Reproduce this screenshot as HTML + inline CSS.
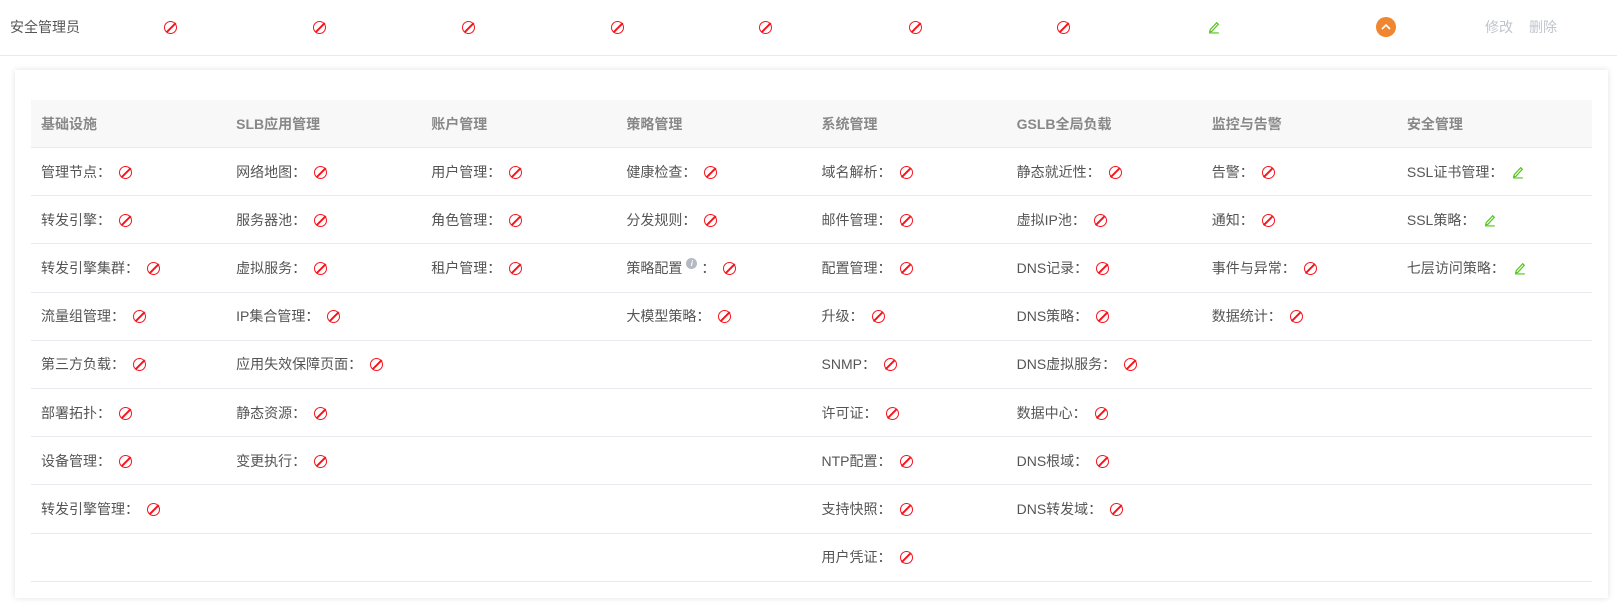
<!DOCTYPE html>
<html><head><meta charset="utf-8"><style>
body{margin:0;background:#fff;font-family:"Liberation Sans","Noto Sans CJK SC",sans-serif;font-size:14px;color:#555;width:1617px;height:606px;overflow:hidden;position:relative}
.top{position:absolute;left:0;top:0;width:1617px;height:55px;border-bottom:1px solid #e8e8ee}
.ab{position:absolute;top:19px;line-height:16px}
.no{display:inline-block;width:11px;height:11px;border:1.5px solid #f5141e;border-radius:50%;position:relative;vertical-align:-2px}
.no:after{content:"";position:absolute;left:50%;top:-1px;width:1.5px;height:13px;background:#f5141e;transform:translateX(-50%) rotate(45deg)}
.card{position:absolute;left:15px;top:70px;width:1593px;height:528px;background:#fff;box-shadow:0 0 6px rgba(0,0,0,.12)}
table{position:absolute;left:16px;top:30px;width:1561px;border-collapse:collapse;table-layout:fixed}
th{background:#f8f8f8;height:47px;text-align:left;padding:0 10px;color:#888;font-weight:bold;border-bottom:1px solid #e8e8ee}
td{height:47.2px;padding:0 10px;border-bottom:1px solid #e8e8ee;white-space:nowrap}
td .no{margin-left:8px}
.pen{display:inline-block;margin-left:8px;vertical-align:-2px}
.info{display:inline-block;width:11px;height:11px;border-radius:50%;background:#b5b9c2;color:#fff;font-size:8px;line-height:11px;text-align:center;font-style:italic;font-weight:bold;vertical-align:7px;margin:0 4px}
</style></head><body>
<div class="top">
<div class="ab" style="left:10px">安全管理员</div>
<span class="ab" style="left:164px"><span class="no"></span></span>
<span class="ab" style="left:313px"><span class="no"></span></span>
<span class="ab" style="left:462px"><span class="no"></span></span>
<span class="ab" style="left:611px"><span class="no"></span></span>
<span class="ab" style="left:759px"><span class="no"></span></span>
<span class="ab" style="left:909px"><span class="no"></span></span>
<span class="ab" style="left:1057px"><span class="no"></span></span>
<svg class="ab" style="left:1207px;top:20px" width="14" height="14" viewBox="0 0 13 13"><path d="M3 9 L9 2.5 L10.5 4 L4.5 10.5 L2.5 11 Z M2 12 H11" fill="none" stroke="#52c41a" stroke-width="1.1"/></svg>
<div style="position:absolute;left:1376px;top:17px;width:20px;height:20px;border-radius:50%;background:#f0862f"><svg width="20" height="20"><path d="M6 12 L10 8 L14 12" fill="none" stroke="#fff" stroke-width="1.6"/></svg></div>
<div class="ab" style="left:1485px;color:#c0c4cc">修改</div>
<div class="ab" style="left:1529px;color:#c0c4cc">删除</div>
</div>
<div class="card"><table>
<tr><th>基础设施</th><th>SLB应用管理</th><th>账户管理</th><th>策略管理</th><th>系统管理</th><th>GSLB全局负载</th><th>监控与告警</th><th>安全管理</th></tr>
<tr><td>管理节点：<span class="no"></span></td><td>网络地图：<span class="no"></span></td><td>用户管理：<span class="no"></span></td><td>健康检查：<span class="no"></span></td><td>域名解析：<span class="no"></span></td><td>静态就近性：<span class="no"></span></td><td>告警：<span class="no"></span></td><td>SSL证书管理：<svg class="pen" width="14" height="14" viewBox="0 0 13 13"><path d="M3 9 L9 2.5 L10.5 4 L4.5 10.5 L2.5 11 Z M2 12 H11" fill="none" stroke="#52c41a" stroke-width="1.1"/></svg></td></tr>
<tr><td>转发引擎：<span class="no"></span></td><td>服务器池：<span class="no"></span></td><td>角色管理：<span class="no"></span></td><td>分发规则：<span class="no"></span></td><td>邮件管理：<span class="no"></span></td><td>虚拟IP池：<span class="no"></span></td><td>通知：<span class="no"></span></td><td>SSL策略：<svg class="pen" width="14" height="14" viewBox="0 0 13 13"><path d="M3 9 L9 2.5 L10.5 4 L4.5 10.5 L2.5 11 Z M2 12 H11" fill="none" stroke="#52c41a" stroke-width="1.1"/></svg></td></tr>
<tr><td>转发引擎集群：<span class="no"></span></td><td>虚拟服务：<span class="no"></span></td><td>租户管理：<span class="no"></span></td><td>策略配置<span class="info">i</span>：<span class="no"></span></td><td>配置管理：<span class="no"></span></td><td>DNS记录：<span class="no"></span></td><td>事件与异常：<span class="no"></span></td><td>七层访问策略：<svg class="pen" width="14" height="14" viewBox="0 0 13 13"><path d="M3 9 L9 2.5 L10.5 4 L4.5 10.5 L2.5 11 Z M2 12 H11" fill="none" stroke="#52c41a" stroke-width="1.1"/></svg></td></tr>
<tr><td>流量组管理：<span class="no"></span></td><td>IP集合管理：<span class="no"></span></td><td></td><td>大模型策略：<span class="no"></span></td><td>升级：<span class="no"></span></td><td>DNS策略：<span class="no"></span></td><td>数据统计：<span class="no"></span></td><td></td></tr>
<tr><td>第三方负载：<span class="no"></span></td><td>应用失效保障页面：<span class="no"></span></td><td></td><td></td><td>SNMP：<span class="no"></span></td><td>DNS虚拟服务：<span class="no"></span></td><td></td><td></td></tr>
<tr><td>部署拓扑：<span class="no"></span></td><td>静态资源：<span class="no"></span></td><td></td><td></td><td>许可证：<span class="no"></span></td><td>数据中心：<span class="no"></span></td><td></td><td></td></tr>
<tr><td>设备管理：<span class="no"></span></td><td>变更执行：<span class="no"></span></td><td></td><td></td><td>NTP配置：<span class="no"></span></td><td>DNS根域：<span class="no"></span></td><td></td><td></td></tr>
<tr><td>转发引擎管理：<span class="no"></span></td><td></td><td></td><td></td><td>支持快照：<span class="no"></span></td><td>DNS转发域：<span class="no"></span></td><td></td><td></td></tr>
<tr><td></td><td></td><td></td><td></td><td>用户凭证：<span class="no"></span></td><td></td><td></td><td></td></tr>
</table></div>
</body></html>
